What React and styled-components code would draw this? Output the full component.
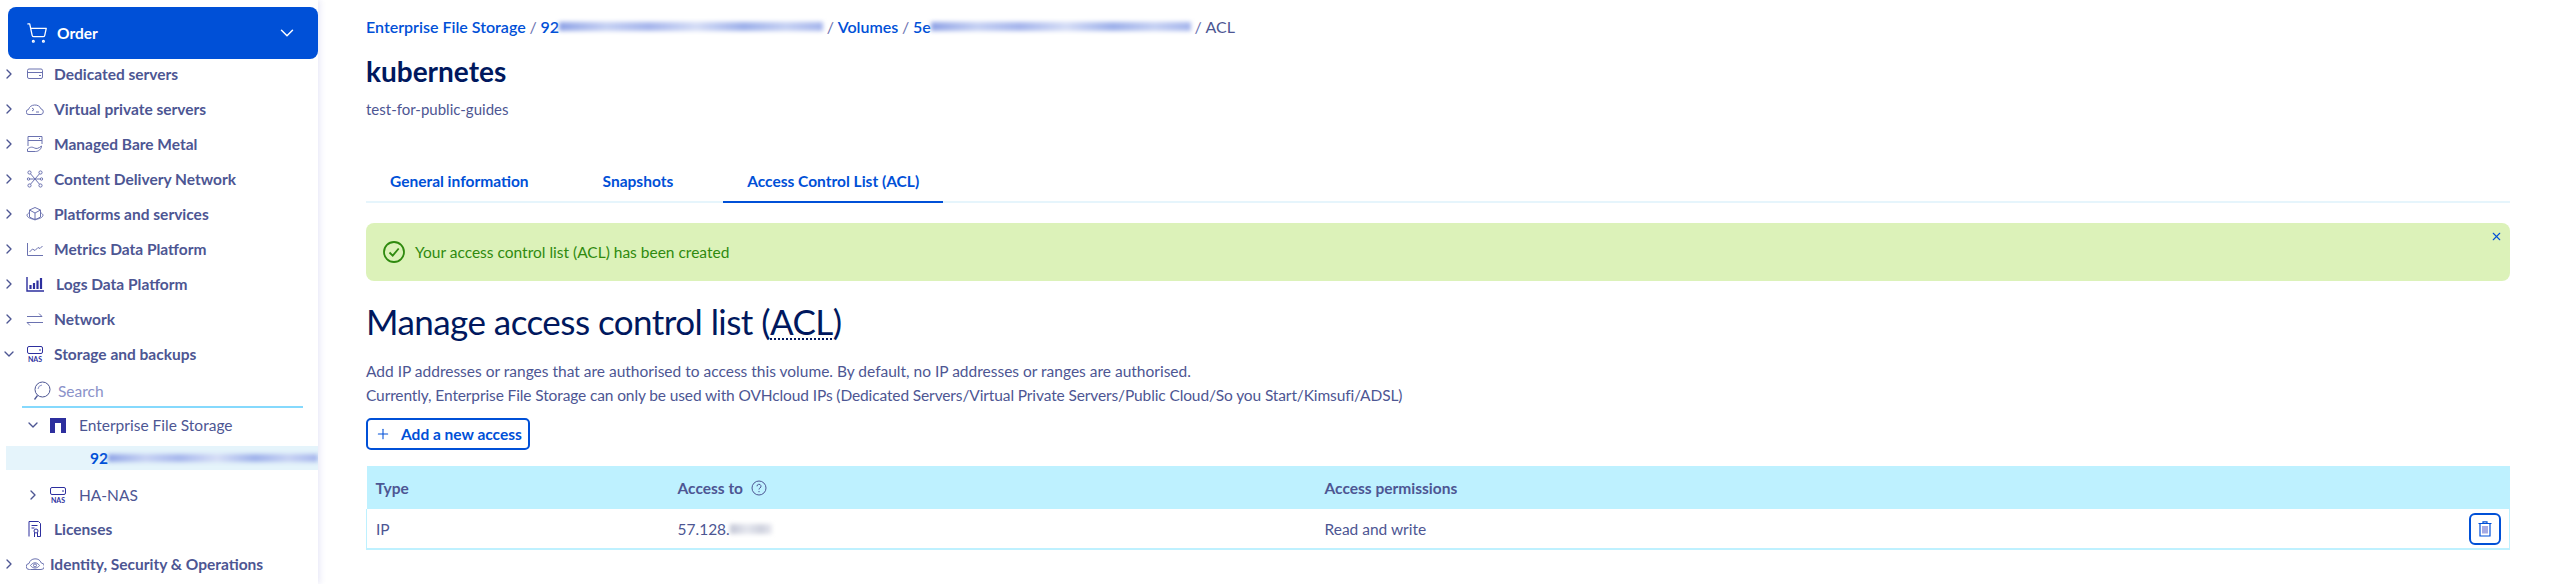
import styled, { createGlobalStyle } from 'styled-components';
import { ChevronDown, ChevronRight, ShoppingCart, X, Plus } from 'lucide-react';

const GlobalStyle = createGlobalStyle`
    html, body {
        margin: 0;
        padding: 0;
        background: #ffffff;
        font-family: "Lato", "Open Sans", sans-serif;
        color: #4d5693;
    }
    * { box-sizing: border-box; }
`;

const Page = styled.div`
    display: flex;
    width: 2557px;
    height: 584px;
    overflow: hidden;
`;

const Sidebar = styled.aside`
    flex: none;
    width: 318px;
    padding-top: 7px;
    background: #ffffff;
    box-shadow: 2px 0 6px rgb(90 90 200 / 0.14);
`;

const OrderButton = styled.div`
    display: flex;
    align-items: center;
    height: 52px;
    margin: 0 0 -3px 8px;
    padding: 0 20px 0 18px;
    border-radius: 8px;
    background: #0050d7;
    color: #ffffff;
    font-size: 15.5px;
    font-weight: 700;
`;

const OrderLabel = styled.span`
    flex: auto;
    margin-left: 9px;
`;

const NavRow = styled.div`
    display: flex;
    align-items: center;
    height: ${(p) => p.$height || 35}px;
    padding-left: ${(p) => p.$indent || 0}px;
    font-size: 15.5px;
    font-weight: ${(p) => (p.$sub ? 400 : 700)};
    white-space: nowrap;
`;

const Toggle = styled.span`
    display: flex;
    flex: none;
    justify-content: center;
    width: ${(p) => (p.$sub ? 24 : 18)}px;
    margin-left: ${(p) => (p.$sub ? 21 : 0)}px;
    color: #4d5693;
`;

const NavIcon = styled.span`
    display: flex;
    flex: none;
    justify-content: center;
    width: 18px;
    margin: 0 ${(p) => p.$gap ?? 10}px 0 ${(p) => p.$left ?? (p.$sub ? 4 : 8)}px;
    color: ${(p) => p.$color || '#6b72b0'};
`;

const SearchBox = styled.div`
    display: flex;
    align-items: center;
    gap: 7px;
    height: 37px;
    margin-left: 22px;
    width: 281px;
    padding: 4px 0 0 11px;
    border-bottom: 2px solid #85d9fd;
    color: #8b92c9;
    font-size: 15.5px;
`;

const SelectedRow = styled.div`
    display: flex;
    align-items: center;
    height: 24px;
    margin: 4px 0 8px 6px;
    padding-left: 84px;
    background: #e5f4fb;
    color: #0050d7;
    font-size: 15.5px;
    font-weight: 700;
    overflow: hidden;
`;

const Redacted = styled.span`
    display: inline-block;
    flex: ${(p) => (p.$fill ? 'auto' : 'none')};
    width: ${(p) => p.$width || 0}px;
    height: ${(p) => p.$barHeight || 9}px;
    background: ${(p) =>
        p.$grey
            ? 'linear-gradient(90deg, #c4c7d6, #e4e6ee 40%, #cfd2de 75%, #e8e9f0)'
            : 'linear-gradient(90deg, #8fa3e6, #c6d1f3 18%, #a5b5ec 34%, #d5ddf6 52%, #9db0ea 70%, #c6d1f3 86%, #a5b5ec)'};
    filter: blur(2px);
`;

const Main = styled.main`
    flex: auto;
    min-width: 0;
    padding: 16px 47px 0 48px;
`;

const Breadcrumb = styled.nav`
    display: flex;
    align-items: center;
    height: 20px;
    font-size: 16px;
    white-space: nowrap;
`;

const Crumb = styled.span`
    color: ${(p) => (p.$current ? '#4d5693' : '#0050d7')};
    font-weight: ${(p) => (p.$current ? 400 : 600)};
`;

const CrumbSep = styled.span`
    margin: 0 3.75px;
    color: #6b72b0;
`;

const Title = styled.h1`
    margin: 17px 0 0;
    color: #00185e;
    font-size: 28px;
    line-height: 36px;
    font-weight: 700;
`;

const Subtitle = styled.p`
    margin: 10px 0 0;
    font-size: 15px;
    line-height: 20px;
`;

const Tabs = styled.div`
    display: flex;
    gap: 26px;
    height: 43px;
    margin-top: 41px;
    border-bottom: 2px solid #e6f5fc;
`;

const Tab = styled.div`
    display: flex;
    align-items: center;
    height: 43px;
    padding: 0 24px;
    border-bottom: 2px solid ${(p) => (p.$active ? '#0050d7' : 'transparent')};
    color: #0050d7;
    font-size: 15.5px;
    font-weight: 700;
`;

const Alert = styled.div`
    display: flex;
    align-items: center;
    gap: 10px;
    position: relative;
    height: 58px;
    margin-top: 20px;
    padding-left: 17px;
    border-radius: 8px;
    background: #dcf2b9;
    color: #2f8a0f;
    font-size: 15.5px;
`;

const AlertClose = styled.span`
    position: absolute;
    top: 7px;
    right: 7px;
    display: flex;
    color: #0050d7;
`;

const Heading = styled.h2`
    margin: 18px 0 0;
    color: #00185e;
    font-size: 35px;
    letter-spacing: -0.55px;
    line-height: 44px;
    font-weight: 400;
`;

const Abbr = styled.abbr`
    text-decoration: underline dotted #00185e 2px;
    text-underline-offset: 3px;
`;

const Description = styled.div`
    margin-top: 16px;
    font-size: 15.5px;
    line-height: 24px;
`;

const DescriptionLine = styled.p`
    margin: 0;
    letter-spacing: ${(p) => (p.$tight ? '-0.12px' : 'normal')};
`;

const AddButton = styled.button`
    display: flex;
    align-items: center;
    gap: 10px;
    width: 164px;
    height: 32px;
    margin-top: 11px;
    padding: 0 0 0 7px;
    border: 2px solid #0050d7;
    border-radius: 5px;
    background: #ffffff;
    color: #0050d7;
    font-family: inherit;
    font-size: 15.5px;
    font-weight: 700;
`;

const Table = styled.table`
    width: 100%;
    margin-top: 16px;
    border-collapse: collapse;
    table-layout: fixed;
    font-size: 15.5px;
`;

const HeadCell = styled.th`
    width: ${(p) => (p.$width ? `${p.$width}px` : 'auto')};
    height: 43px;
    padding: 0 0 0 9px;
    background: #bef1ff;
    font-weight: 700;
    text-align: left;
`;

const BodyRow = styled.tr`
    border: solid #bef1ff;
    border-width: 0 1px 2px 1px;
`;

const BodyCell = styled.td`
    height: 40px;
    padding: 0 ${(p) => (p.$action ? 8 : 0)}px 0 9px;
`;

const HeadInner = styled.span`
    display: flex;
    align-items: center;
    gap: 8px;
`;

const TrashButton = styled.span`
    display: flex;
    align-items: center;
    justify-content: center;
    width: 32px;
    height: 32px;
    margin-left: auto;
    border: 2px solid #0050d7;
    border-radius: 6px;
    color: #0050d7;
`;

const Cell = styled.span`
    display: flex;
    align-items: center;
`;

const Icon = ({ children, sw = 1 }) => (
    <svg width={18} height={18} viewBox="0 0 18 18" fill="none" stroke="currentColor" strokeWidth={sw}>
        {children}
    </svg>
);

const ServerIcon = () => (
    <Icon>
        <rect x="1.5" y="4" width="15" height="9.500" rx="1.500" />
        <path d="M1.500 7.500h15M13 10.500h2" />
    </Icon>
);

const CloudIcon = () => (
    <Icon>
        <path d="M4 14.500H3a2.500 2.500 0 0 1-.5-5 6.800 6.800 0 0 1 12.600-.5 2.800 2.800 0 0 1-.1 5.500z" />
        <path d="M6 8l2 1.500L6 11M10 12h3" />
    </Icon>
);

const BareMetalIcon = () => (
    <Icon>
        <path d="M2 11V1.500h14V9M2 5.500h14M13 3.500h1" />
        <path d="M1.500 14c3-2.500 5-2 7-1s4 .5 7-2c0 3-3 5.500-6 5.500h-8z" />
    </Icon>
);

const CdnIcon = () => (
    <Icon>
        <circle cx="3.500" cy="2.500" r="1.600" />
        <circle cx="14.500" cy="2.500" r="1.600" />
        <circle cx="3.500" cy="15.500" r="1.600" />
        <circle cx="14.500" cy="15.500" r="1.600" />
        <circle cx="2.500" cy="9" r="1.200" />
        <circle cx="15.500" cy="9" r="1.200" />
        <path d="M4.500 3.800l9 10.400M13.500 3.800l-9 10.400M3.700 9h10.600" />
    </Icon>
);

const PlatformIcon = () => (
    <Icon>
        <path d="M9 2.500l5.500 2.500v7L9 15l-5.500-3V5z" />
        <path d="M3.500 5L9 8l5.500-3M9 8v7" />
        <path d="M3.500 7.500C1.800 8.500 1 9.500 1 10.200c0 2 3.600 4 8 4s8-2 8-4c0-.7-.8-1.700-2.500-2.700" />
    </Icon>
);

const MetricsIcon = () => (
    <Icon>
        <path d="M1.500 3v12.500H17" />
        <path d="M3.500 12l3-3 2.500 1.500 3-3 2 1 2.500-2.500" />
    </Icon>
);

const LogsIcon = () => (
    <Icon sw={1.4}>
        <path d="M1 2v14h17" />
        <path d="M4.500 14v-4M8 14V8M11.500 14V5.500M15 14V3" strokeWidth="2.200" />
    </Icon>
);

const NetworkIcon = () => (
    <Icon>
        <path d="M1 6.500h15M13 3.500l3 3M1 12.500h16M1 12.500l3 3" />
    </Icon>
);

const NasIcon = () => (
    <svg width="18" height="18" viewBox="0 0 18 18" fill="none" stroke="currentColor">
        <rect x="1.500" y="1.500" width="15" height="7" rx="1.500" />
        <path d="M13 5h2" />
        <text x="9" y="16.500" fontSize="7" fontWeight="700" fill="currentColor" stroke="none" textAnchor="middle" fontFamily="Lato">NAS</text>
    </svg>
);

const NetAppIcon = () => (
    <svg width="16" height="15" viewBox="0 0 16 15">
        <path fill="#2d2f9e" d="M0 0h16v15h-5V5H5v10H0z" />
    </svg>
);

const LicenseIcon = () => (
    <Icon>
        <path d="M3 16.500V1.500h9.500l2 2v13H11" />
        <path d="M5.500 5.500h6M5.500 8h3" />
        <circle cx="10" cy="11" r="2" />
        <path d="M8.500 12.500V17M11.500 12.500V17" />
    </Icon>
);

const IdentityIcon = () => (
    <Icon>
        <path d="M4.500 14.500H3.500a3 3 0 0 1-.5-6 6.500 6.500 0 0 1 12.300-.5 3.200 3.200 0 0 1-.3 6.500z" />
        <path d="M4.500 10.500C6 8.500 7.500 7.800 9 7.800s3 .7 4.500 2.700C12 12.500 10.500 13 9 13s-3-.5-4.500-2.500z" />
        <circle cx="9" cy="10.400" r="1.500" />
    </Icon>
);

const SearchIcon = () => (
    <svg width="18" height="20" viewBox="0 0 18 20" fill="none" stroke="#4d5693">
        <circle cx="9.500" cy="8.500" r="7.500" />
        <path d="M4.500 14.500L1.500 18.500" strokeWidth="1.300" />
        <path d="M5 8a4.500 4.500 0 0 1 4-4" stroke="#8b92c9" />
    </svg>
);

const CheckCircleIcon = () => (
    <svg width="22" height="22" viewBox="0 0 22 22" fill="none" stroke="#2f8a0f" strokeWidth="1.800">
        <circle cx="11" cy="11" r="10" />
        <path d="M6.500 11.500l3.200 3.200 6-7.200" />
    </svg>
);

const HelpIcon = () => (
    <svg width="16" height="16" viewBox="0 0 16 16" fill="none" stroke="#4d5693">
        <circle cx="8" cy="8" r="7" />
        <path d="M6 6.300a2 2 0 1 1 3 1.700c-.7.400-1 .8-1 1.500" />
        <path d="M8 11v1.200" />
    </svg>
);

const TrashIcon = () => (
    <svg width="14" height="16" viewBox="0 0 14 16" fill="none" stroke="currentColor" strokeWidth="1.200">
        <path d="M0.500 2.500h13M5 2.500V.8h4v1.700" />
        <path d="M2 2.500v12.500h10V2.500" />
        <path d="M5 5v7.500M7 5v7.500M9 5v7.500" stroke="#6b72d0" />
    </svg>
);

const topItems = [
    { label: 'Dedicated servers', icon: <ServerIcon /> },
    { label: 'Virtual private servers', icon: <CloudIcon /> },
    { label: 'Managed Bare Metal', icon: <BareMetalIcon /> },
    { label: 'Content Delivery Network', icon: <CdnIcon /> },
    { label: 'Platforms and services', icon: <PlatformIcon /> },
    { label: 'Metrics Data Platform', icon: <MetricsIcon /> },
    { label: 'Logs Data Platform', icon: <LogsIcon />, gap: 12, color: '#2d2f9e' },
    { label: 'Network', icon: <NetworkIcon /> },
];

const App = () => {
    return (
        <>
            <GlobalStyle />
            <Page>
                <Sidebar>
                    <OrderButton>
                        <ShoppingCart size={22} strokeWidth={1.4} />
                        <OrderLabel>Order</OrderLabel>
                        <ChevronDown size={22} strokeWidth={1.6} />
                    </OrderButton>
                    {topItems.map((item) => (
                        <NavRow key={item.label}>
                            <Toggle><ChevronRight size={16} strokeWidth={2} /></Toggle>
                            <NavIcon $gap={item.gap} $color={item.color}>{item.icon}</NavIcon>
                            {item.label}
                        </NavRow>
                    ))}
                    <NavRow>
                        <Toggle><ChevronDown size={16} strokeWidth={2} /></Toggle>
                        <NavIcon $color="#2d2f9e"><NasIcon /></NavIcon>
                        Storage and backups
                    </NavRow>
                    <SearchBox><SearchIcon />Search</SearchBox>
                    <NavRow $height={34} $sub>
                        <Toggle $sub><ChevronDown size={16} strokeWidth={2} /></Toggle>
                        <NavIcon $sub $gap={12}><NetAppIcon /></NavIcon>
                        Enterprise File Storage
                    </NavRow>
                    <SelectedRow>92<Redacted $fill $barHeight={8} /></SelectedRow>
                    <NavRow $height={33} $sub>
                        <Toggle $sub><ChevronRight size={16} strokeWidth={2} /></Toggle>
                        <NavIcon $sub $gap={12} $color="#2d2f9e"><NasIcon /></NavIcon>
                        HA-NAS
                    </NavRow>
                    <NavRow>
                        <NavIcon $left={26} $color="#2d2f9e"><LicenseIcon /></NavIcon>
                        Licenses
                    </NavRow>
                    <NavRow>
                        <Toggle><ChevronRight size={16} strokeWidth={2} /></Toggle>
                        <NavIcon $gap={6}><IdentityIcon /></NavIcon>
                        Identity, Security &amp; Operations
                    </NavRow>
                </Sidebar>
                <Main>
                    <Breadcrumb>
                        <Crumb>Enterprise File Storage</Crumb><CrumbSep>/</CrumbSep>
                        <Crumb>92</Crumb><Redacted $width={264} />
                        <CrumbSep>/</CrumbSep>
                        <Crumb>Volumes</Crumb><CrumbSep>/</CrumbSep>
                        <Crumb>5e</Crumb><Redacted $width={260} />
                        <CrumbSep>/</CrumbSep>
                        <Crumb $current>ACL</Crumb>
                    </Breadcrumb>
                    <Title>kubernetes</Title>
                    <Subtitle>test-for-public-guides</Subtitle>
                    <Tabs>
                        <Tab>General information</Tab>
                        <Tab>Snapshots</Tab>
                        <Tab $active>Access Control List (ACL)</Tab>
                    </Tabs>
                    <Alert>
                        <CheckCircleIcon />
                        Your access control list (ACL) has been created
                        <AlertClose><X size={13} strokeWidth={2} /></AlertClose>
                    </Alert>
                    <Heading>Manage access control list (<Abbr>ACL</Abbr>)</Heading>
                    <Description>
                        <DescriptionLine>
                            Add IP addresses or ranges that are authorised to access this volume. By default, no IP addresses or ranges are authorised.
                        </DescriptionLine>
                        <DescriptionLine $tight>
                            Currently, Enterprise File Storage can only be used with OVHcloud IPs (Dedicated Servers/Virtual Private Servers/Public Cloud/So you Start/Kimsufi/ADSL)
                        </DescriptionLine>
                    </Description>
                    <AddButton><Plus size={16} strokeWidth={1.6} />Add a new access</AddButton>
                    <Table>
                        <thead>
                            <tr>
                                <HeadCell $width={302}>Type</HeadCell>
                                <HeadCell $width={647}><HeadInner>Access to <HelpIcon /></HeadInner></HeadCell>
                                <HeadCell>Access permissions</HeadCell>
                                <HeadCell $width={60} />
                            </tr>
                        </thead>
                        <tbody>
                            <BodyRow>
                                <BodyCell>IP</BodyCell>
                                <BodyCell>
                                    <Cell>57.128.<Redacted $width={42} $barHeight={10} $grey /></Cell>
                                </BodyCell>
                                <BodyCell>Read and write</BodyCell>
                                <BodyCell $action><TrashButton><TrashIcon /></TrashButton></BodyCell>
                            </BodyRow>
                        </tbody>
                    </Table>
                </Main>
            </Page>
        </>
    );
};

export default App;
